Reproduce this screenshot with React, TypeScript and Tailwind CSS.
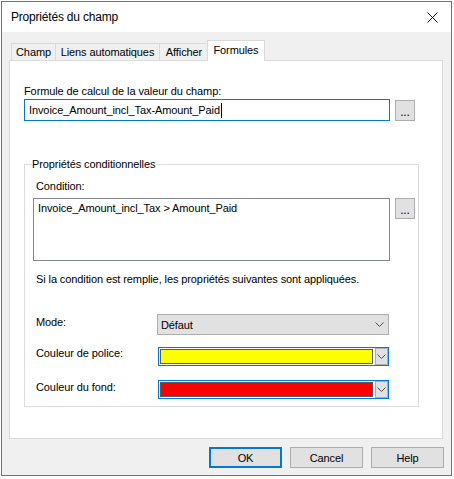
import React from "react";

const font = { fontFamily: '"Liberation Sans", Arial, sans-serif' };

const Chevron = () => (
  <svg width="9" height="5" viewBox="0 0 9 5" className="block">
    <path d="M0.5 0.5 L4.5 4.5 L8.5 0.5" fill="none" stroke="#4d4d4d" strokeWidth="1" />
  </svg>
);

const DotsButton = () => (
  <button className="mt-[1px] flex h-[21px] w-[20px] items-end justify-center border border-[#adadad] bg-[#e1e1e1] pb-[3px] text-[12px] leading-[10px] text-black">
    ...
  </button>
);

const ColorBox = ({ color }: { color: string }) => (
  <div className="flex h-[19px] w-[231px] border border-[#0078d7] bg-white">
    <div className="m-[1px] flex-1 border border-[#5a5a5a]" style={{ backgroundColor: color }} />
    <div className="ml-[1px] flex w-[13px] items-center justify-center border border-[#adadad] bg-[#e1e1e1]">
      <Chevron />
    </div>
  </div>
);

export default function App() {
  const tabs = ["Champ", "Liens automatiques", "Afficher"];
  const widths = ["w-[44px]", "w-[104px]", "w-[49px]"];

  return (
    <div className="h-[479px] w-[454px] bg-white pl-[1px] pt-[1px] text-[11px] tracking-[-0.1px] text-black" style={font}>
      <div className="flex h-[475px] w-[451px] flex-col border border-[#737373] bg-[#f0f0f0]">
        {/* title bar */}
        <div className="flex h-[30px] items-center justify-between bg-white pl-[9px] pr-[10px]">
          <span className="text-[12px] leading-[16px] tracking-[-0.2px]">Propriétés du champ</span>
          <svg width="11" height="11" viewBox="0 0 11 11" className="mr-[3px]">
            <path d="M0.5 0.5 L10.5 10.5 M10.5 0.5 L0.5 10.5" stroke="#111" strokeWidth="1" />
          </svg>
        </div>

        <div className="flex flex-1 flex-col px-[7px] pt-[8px]">
          {/* tabs */}
          <div className="flex h-[20px] items-end pl-[2px]">
            {tabs.map((t, i) => (
              <div
                key={t}
                className={`flex h-[17px] items-center justify-center whitespace-nowrap border-l border-t border-[#d9d9d9] bg-[#f0f0f0] leading-[16px] ${widths[i]}`}
              >
                {t}
              </div>
            ))}
            <div className="relative z-10 -mb-[1px] -ml-[1px] flex h-[21px] w-[58px] items-start justify-center whitespace-nowrap border-l border-r border-t border-[#d9d9d9] bg-white pt-[1px] leading-[16px]">
              Formules
            </div>
          </div>

          {/* panel */}
          <div className="flex h-[379px] w-[434px] flex-col border border-[#d9d9d9] bg-white px-[14px]">
            <div className="mt-[22px] leading-[16px]">Formule de calcul de la valeur du champ:</div>
            <div className="flex items-start gap-[5px]">
              <div className="flex h-[22px] w-[366px] items-center border border-[#0078d7] pl-[4px] leading-[16px]">
                Invoice_Amount_incl_Tax-Amount_Paid
                <span className="ml-[1px] inline-block h-[15px] w-[1px] bg-black" />
              </div>
              <DotsButton />
            </div>

            <fieldset className="mt-[35px] w-[395px] border border-[#dcdcdc] pb-[7px] pl-[8px]">
              <legend className="-ml-[1px] pr-[1px] leading-[16px]">Propriétés conditionnelles</legend>
              <div className="ml-[3px] mt-[6px] leading-[16px]">Condition:</div>
              <div className="mt-[4px] flex items-start gap-[5px]">
                <div className="h-[63px] w-[357px] border border-[#828790] pl-[4px] pt-[1px] leading-[16px]">
                  Invoice_Amount_incl_Tax &gt; Amount_Paid
                </div>
                <button className="flex h-[21px] w-[20px] items-end justify-center border border-[#adadad] bg-[#e1e1e1] pb-[3px] text-[12px] leading-[10px]">
                  ...
                </button>
              </div>
              <div className="ml-[3px] mt-[10px] leading-[16px]">
                Si la condition est remplie, les propriétés suivantes sont appliquées.
              </div>

              <div className="mt-[27px] flex items-start">
                <div className="ml-[3px] w-[121px] leading-[16px]">Mode:</div>
                <div className="flex h-[21px] w-[232px] items-center justify-between border border-[#adadad] bg-[#e1e1e1] pl-[3px] pr-[4px] leading-[16px]">
                  Défaut
                  <Chevron />
                </div>
              </div>

              <div className="mt-[12px] flex items-start">
                <div className="-mt-[2px] ml-[3px] w-[122px] leading-[16px]">Couleur de police:</div>
                <ColorBox color="#ffff00" />
              </div>

              <div className="mt-[14px] flex items-start">
                <div className="-mt-[1px] ml-[3px] w-[122px] leading-[16px]">Couleur du fond:</div>
                <ColorBox color="#ff0000" />
              </div>
            </fieldset>
          </div>

          {/* buttons */}
          <div className="mt-[8px] flex justify-end gap-[8px]">
            <button className="h-[21px] w-[73px] border-2 border-[#0078d7] bg-[#e1e1e1] leading-[16px]">OK</button>
            <button className="h-[21px] w-[73px] border border-[#adadad] bg-[#e1e1e1] leading-[16px]">Cancel</button>
            <button className="h-[21px] w-[73px] border border-[#adadad] bg-[#e1e1e1] leading-[16px]">Help</button>
          </div>
        </div>
      </div>
    </div>
  );
}
